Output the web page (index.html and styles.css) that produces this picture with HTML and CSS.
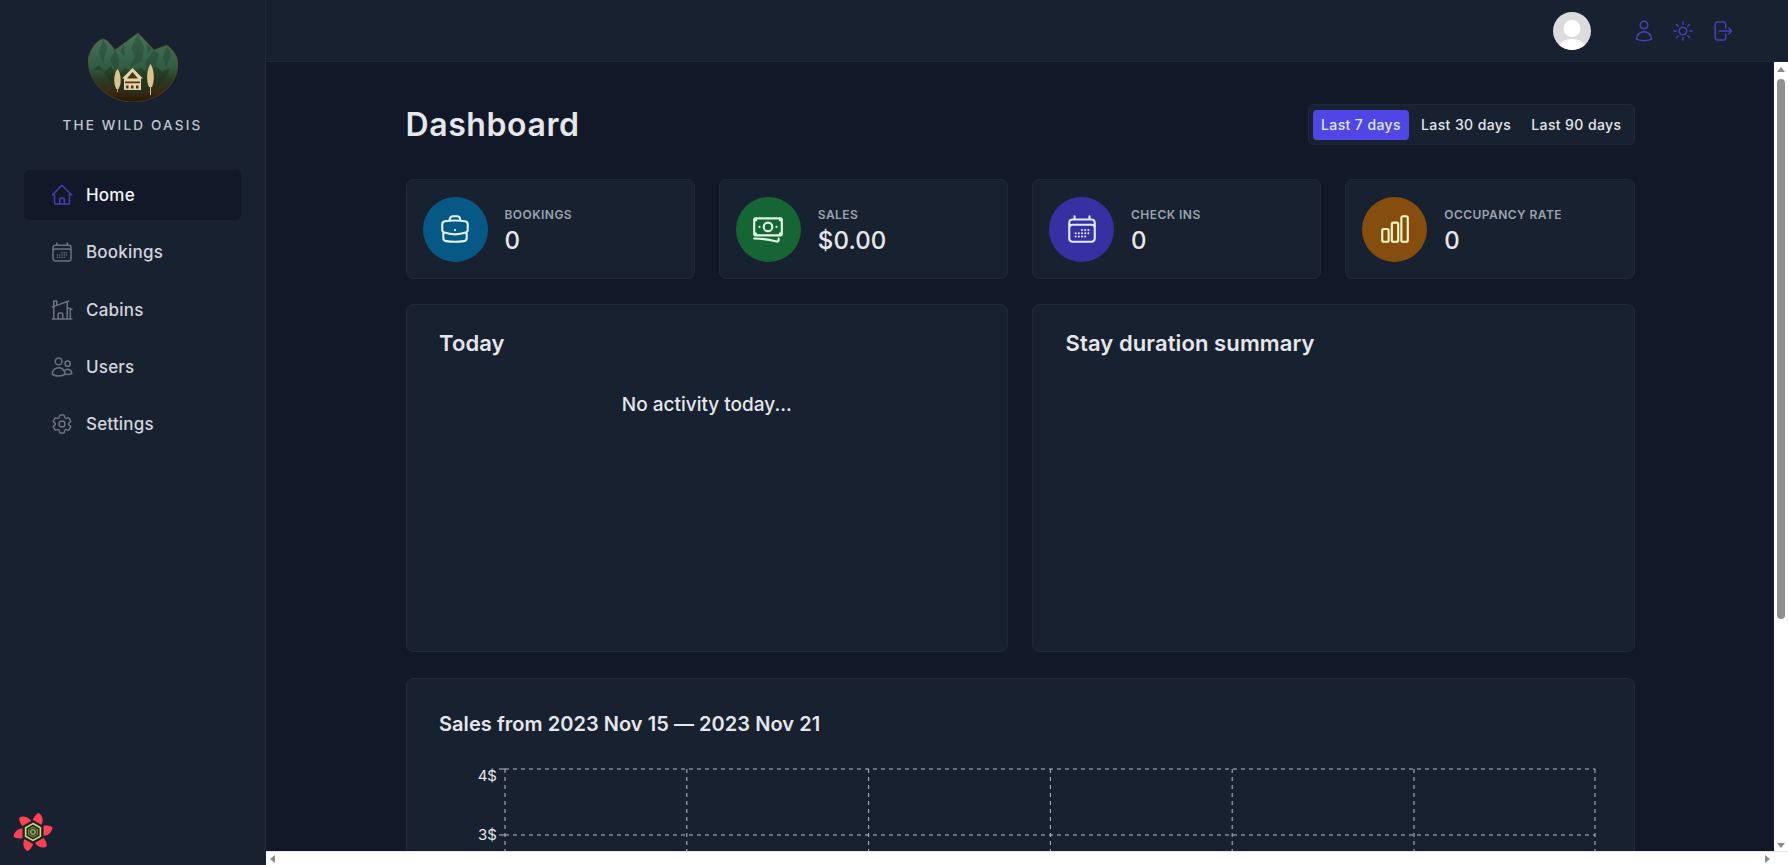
FILE: index.html
```html
<!DOCTYPE html>
<html lang="en">
<head>
<meta charset="utf-8">
<title>The Wild Oasis</title>
<link rel="stylesheet" href="styles.css">
</head>
<body>
<div class="app">
  <aside class="sidebar">
    <div class="brand">
      <svg class="logo" viewBox="0 0 90 70" aria-hidden="true">
        <defs>
          <linearGradient id="lg" x1="0" y1="0" x2="0" y2="1">
            <stop offset="0" stop-color="#47765a"/>
            <stop offset=".5" stop-color="#315c42"/>
            <stop offset=".68" stop-color="#2a3a22"/>
            <stop offset=".86" stop-color="#3a2810"/>
            <stop offset="1" stop-color="#241809"/>
          </linearGradient>
        </defs>
        <path fill="url(#lg)" stroke="#6e4a1c" stroke-opacity=".7" stroke-width=".8" d="M0 28C1 19 8 8 15 7c5 1 9 7 12 11L50 1l16 17 13-5c6 5 11 11 11 19C90 54 68 70 45 70 22 70 0 52 0 28z"/>
        <path fill="#1f3f2d" opacity=".4" d="M27 18l4 9-2 13-7-12zM50 1l-7 15 4 9-6 11 13-7 2-14zM66 18l-9 12 2 12 9-10 3-10zM15 7l-4 13 4 11 4-16zM79 13l-4 12 3 10 5-12zM36 12l-4 8 5 4zM58 12l2 10 4-6z"/>
        <path fill="#20331f" opacity=".55" d="M5 38l6-5 5 8 7-7 6 10 8-8 8 4 8-4 8 6 7-8 6 6 8-4c-4 14-16 25-31 27-16 0-30-12-36-25z"/>
        <path fill="#dcc38a" d="M28.500 57c-4-6-2-17 1-20 3 3 5 14 1 20h-.7v3h-.8v-3zM61 55c-3.500-8-1.500-19 1.500-23 3 4 5 15 1.500 23h-1v8h-1v-8z"/>
        <path fill="#e6d3a8" d="M44.500 36l10.500 10.500h-2V58H36V46.500h-2z"/>
        <path fill="#4f3417" d="M44.500 40l5.500 6.500H39zM37 49.500h15v1.800H37zM38 53.500h2.500v3H38zM43 53.500h2.500v3H43zM48 53.500h2.500v3H48zM42 43.500h5v2h-5z"/>
      </svg>
      <div class="brand-name">THE WILD OASIS</div>
    </div>
    <nav class="nav">
      <a class="nav-item active">
        <svg class="icon" viewBox="0 0 24 24"><path d="M2.25 12l8.954-8.955c.44-.439 1.152-.439 1.591 0L21.75 12M4.5 9.75v10.125c0 .621.504 1.125 1.125 1.125H9.75v-4.875c0-.621.504-1.125 1.125-1.125h2.25c.621 0 1.125.504 1.125 1.125V21h4.125c.621 0 1.125-.504 1.125-1.125V9.75M8.25 21h8.25"/></svg>
        <span>Home</span>
      </a>
      <a class="nav-item">
        <svg class="icon" viewBox="0 0 24 24"><path d="M6.75 3v2.25M17.25 3v2.25M3 18.75V7.5a2.25 2.25 0 012.25-2.25h13.5A2.25 2.25 0 0121 7.5v11.25m-18 0A2.25 2.25 0 005.25 21h13.5A2.25 2.25 0 0021 18.75m-18 0v-7.5A2.25 2.25 0 015.25 9h13.5A2.25 2.25 0 0121 11.25v7.5m-9-6h.008v.008H12v-.008zM12 15h.008v.008H12V15zm0 2.25h.008v.008H12v-.008zM9.75 15h.008v.008H9.75V15zm0 2.25h.008v.008H9.75v-.008zM7.5 15h.008v.008H7.5V15zm0 2.25h.008v.008H7.5v-.008zm6.75-4.5h.008v.008h-.008v-.008zm0 2.25h.008v.008h-.008V15zm0 2.25h.008v.008h-.008v-.008zm2.25-4.5h.008v.008H16.5v-.008zm0 2.25h.008v.008H16.5V15z"/></svg>
        <span>Bookings</span>
      </a>
      <a class="nav-item">
        <svg class="icon" viewBox="0 0 24 24"><path d="M8.25 21v-4.875c0-.621.504-1.125 1.125-1.125h2.25c.621 0 1.125.504 1.125 1.125V21m0 0h4.5V3.545M12.75 21h7.5V10.75M2.25 21h1.5m18 0h-18M2.25 9l4.5-1.636M18.75 3l-1.5.545m0 6.205l3 1m1.5.5l-1.5-.5M6.75 7.364V3h-3v18m3-13.636l10.5-3.819"/></svg>
        <span>Cabins</span>
      </a>
      <a class="nav-item">
        <svg class="icon" viewBox="0 0 24 24"><path d="M15 19.128a9.38 9.38 0 002.625.372 9.337 9.337 0 004.121-.952 4.125 4.125 0 00-7.533-2.493M15 19.128v-.003c0-1.113-.285-2.16-.786-3.07M15 19.128v.106A12.318 12.318 0 018.624 21c-2.331 0-4.512-.645-6.374-1.766l-.001-.109a6.375 6.375 0 0111.964-3.07M12 6.375a3.375 3.375 0 11-6.75 0 3.375 3.375 0 016.75 0zm8.25 2.25a2.625 2.625 0 11-5.25 0 2.625 2.625 0 015.25 0z"/></svg>
        <span>Users</span>
      </a>
      <a class="nav-item">
        <svg class="icon" viewBox="0 0 24 24"><path d="M9.594 3.94c.09-.542.56-.94 1.11-.94h2.593c.55 0 1.02.398 1.11.94l.213 1.281c.063.374.313.686.645.87.074.04.147.083.22.127.324.196.72.257 1.075.124l1.217-.456a1.125 1.125 0 011.37.49l1.296 2.247a1.125 1.125 0 01-.26 1.431l-1.003.827c-.293.24-.438.613-.431.992a6.759 6.759 0 010 .255c-.007.378.138.75.43.99l1.005.828c.424.35.534.954.26 1.43l-1.298 2.247a1.125 1.125 0 01-1.369.491l-1.217-.456c-.355-.133-.75-.072-1.076.124a6.57 6.57 0 01-.22.128c-.331.183-.581.495-.644.869l-.213 1.28c-.09.543-.56.941-1.11.941h-2.594c-.55 0-1.02-.398-1.11-.94l-.213-1.281c-.062-.374-.312-.686-.644-.87a6.52 6.52 0 01-.22-.127c-.325-.196-.72-.257-1.076-.124l-1.217.456a1.125 1.125 0 01-1.369-.49l-1.297-2.247a1.125 1.125 0 01.26-1.431l1.004-.827c.292-.24.437-.613.43-.992a6.932 6.932 0 010-.255c.007-.378-.138-.75-.43-.99l-1.004-.828a1.125 1.125 0 01-.26-1.43l1.297-2.247a1.125 1.125 0 011.37-.491l1.216.456c.356.133.751.072 1.076-.124.072-.044.146-.087.22-.128.332-.183.582-.495.644-.869l.214-1.281z"/><path d="M15 12a3 3 0 11-6 0 3 3 0 016 0z"/></svg>
        <span>Settings</span>
      </a>
    </nav>
    <svg class="devtools" viewBox="0 0 40 40" aria-hidden="true">
      <g fill="#ff4154">
        <path d="M20 20C13.500 15 12.500 6 15.500 1.500 23 2 27 11 20 20Z" transform="rotate(-30 20 20)"/>
        <path d="M20 20C13.500 15 12.500 6 15.500 1.500 23 2 27 11 20 20Z" transform="rotate(30 20 20)"/>
        <path d="M20 20C13.500 15 12.500 6 15.500 1.500 23 2 27 11 20 20Z" transform="rotate(90 20 20)"/>
        <path d="M20 20C13.500 15 12.500 6 15.500 1.500 23 2 27 11 20 20Z" transform="rotate(150 20 20)"/>
        <path d="M20 20C13.500 15 12.500 6 15.500 1.500 23 2 27 11 20 20Z" transform="rotate(210 20 20)"/>
        <path d="M20 20C13.500 15 12.500 6 15.500 1.500 23 2 27 11 20 20Z" transform="rotate(270 20 20)"/>
      </g>
      <polygon points="20,8.500 30,14.250 30,25.750 20,31.500 10,25.750 10,14.250" fill="#18212f"/>
      <polygon points="20,12 27,16 27,24 20,28 13,24 13,16" fill="none" stroke="#d8d96a" stroke-width="1.600"/>
      <polygon points="20,15 24.300,17.500 24.300,22.500 20,25 15.700,22.500 15.700,17.500" fill="#3b4a2a" stroke="#8fa33f" stroke-width=".8"/>
      <circle cx="20" cy="20" r="2.200" fill="none" stroke="#d8d96a" stroke-width=".9"/>
    </svg>
  </aside>

  <div class="workspace">
    <header class="topbar">
      <svg class="avatar" viewBox="0 0 38 38" aria-hidden="true">
        <defs><clipPath id="ac"><circle cx="19" cy="19" r="19"/></clipPath></defs>
        <g clip-path="url(#ac)">
          <rect width="38" height="38" fill="#dcdcdc"/>
          <circle cx="19" cy="16.500" r="8.500" fill="#fff"/>
          <ellipse cx="19" cy="37" rx="14" ry="10" fill="#fff"/>
        </g>
      </svg>
      <div class="top-actions">
        <svg class="icon" viewBox="0 0 24 24"><path d="M15.750 6a3.750 3.750 0 11-7.500 0 3.750 3.750 0 017.500 0zM4.501 20.118a7.500 7.500 0 0114.998 0A17.933 17.933 0 0112 21.750c-2.676 0-5.216-.584-7.499-1.632z"/></svg>
        <svg class="icon" viewBox="0 0 24 24"><path d="M12 3v2.250m6.364.386l-1.591 1.591M21 12h-2.250m-.386 6.364l-1.591-1.591M12 18.750V21m-4.773-4.227l-1.591 1.591M5.250 12H3m4.227-4.773L5.636 5.636M15.750 12a3.750 3.750 0 11-7.500 0 3.750 3.750 0 017.500 0z"/></svg>
        <svg class="icon" viewBox="0 0 24 24"><path d="M15.750 9V5.250A2.250 2.250 0 0013.500 3h-6a2.250 2.250 0 00-2.250 2.250v13.500A2.250 2.250 0 007.500 21h6a2.250 2.250 0 002.250-2.250V15m3 0l3-3m0 0l-3-3m3 3H9"/></svg>
      </div>
    </header>

    <div class="viewport">
      <main class="main">
        <div class="container">
          <div class="page-head">
            <h1 class="page-title">Dashboard</h1>
            <div class="filter">
              <button class="filter-btn current">Last 7 days</button>
              <button class="filter-btn">Last 30 days</button>
              <button class="filter-btn">Last 90 days</button>
            </div>
          </div>

          <section class="stats">
            <div class="stat">
              <div class="stat-icon blue"><svg class="icon" viewBox="0 0 24 24"><path d="M20.250 14.150v4.250c0 1.094-.787 2.036-1.872 2.180-2.087.277-4.216.420-6.378.420s-4.291-.143-6.378-.420c-1.085-.144-1.872-1.086-1.872-2.180v-4.250m16.500 0a2.180 2.180 0 00.750-1.661V8.706c0-1.081-.768-2.015-1.837-2.175a48.114 48.114 0 00-3.413-.387m4.500 8.006c-.194.165-.420.295-.673.380A23.978 23.978 0 0112 15.750c-2.648 0-5.195-.429-7.577-1.220a2.016 2.016 0 01-.673-.380m0 0A2.180 2.180 0 013 12.489V8.706c0-1.081.768-2.015 1.837-2.175a48.111 48.111 0 013.413-.387m7.500 0V5.250A2.250 2.250 0 0013.500 3h-3a2.250 2.250 0 00-2.250 2.250v.894m7.500 0a48.667 48.667 0 00-7.500 0M12 12.750h.008v.008H12v-.008z"/></svg></div>
              <div class="stat-text"><div class="stat-label">Bookings</div><div class="stat-value">0</div></div>
            </div>
            <div class="stat">
              <div class="stat-icon green"><svg class="icon" viewBox="0 0 24 24"><path d="M2.250 18.750a60.070 60.070 0 0115.797 2.101c.727.198 1.453-.342 1.453-1.096V18.750M3.750 4.500v.750A.750.750 0 013 6h-.750m0 0v-.375c0-.621.504-1.125 1.125-1.125H20.250M2.250 6v9m18-10.500v.750c0 .414.336.750.750.750h.750m-1.500-1.500h.375c.621 0 1.125.504 1.125 1.125v9.750c0 .621-.504 1.125-1.125 1.125h-.375m1.500-1.500H21a.750.750 0 00-.750.750v.750m0 0H3.750m0 0h-.375a1.125 1.125 0 01-1.125-1.125V15m1.500 1.500v-.750A.750.750 0 003 15h-.750M15 10.500a3 3 0 11-6 0 3 3 0 016 0zm3 0h.008v.008H18V10.500zm-12 0h.008v.008H6V10.500z"/></svg></div>
              <div class="stat-text"><div class="stat-label">Sales</div><div class="stat-value">$0.00</div></div>
            </div>
            <div class="stat">
              <div class="stat-icon indigo"><svg class="icon" viewBox="0 0 24 24"><path d="M6.750 3v2.250M17.250 3v2.250M3 18.750V7.500a2.250 2.250 0 012.250-2.250h13.500A2.250 2.250 0 0121 7.500v11.250m-18 0A2.250 2.250 0 005.250 21h13.500A2.250 2.250 0 0021 18.750m-18 0v-7.500A2.250 2.250 0 015.250 9h13.500A2.250 2.250 0 0121 11.250v7.500m-9-6h.008v.008H12v-.008zM12 15h.008v.008H12V15zm0 2.250h.008v.008H12v-.008zM9.750 15h.008v.008H9.750V15zm0 2.250h.008v.008H9.750v-.008zM7.500 15h.008v.008H7.500V15zm0 2.250h.008v.008H7.500v-.008zm6.750-4.500h.008v.008h-.008v-.008zm0 2.250h.008v.008h-.008V15zm0 2.250h.008v.008h-.008v-.008zm2.250-4.500h.008v.008H16.500v-.008zm0 2.250h.008v.008H16.500V15z"/></svg></div>
              <div class="stat-text"><div class="stat-label">Check ins</div><div class="stat-value">0</div></div>
            </div>
            <div class="stat">
              <div class="stat-icon amber"><svg class="icon" viewBox="0 0 24 24"><path d="M3 13.125C3 12.504 3.504 12 4.125 12h2.250c.621 0 1.125.504 1.125 1.125v6.750C7.500 20.496 6.996 21 6.375 21h-2.250A1.125 1.125 0 013 19.875v-6.750zM9.750 8.625c0-.621.504-1.125 1.125-1.125h2.250c.621 0 1.125.504 1.125 1.125v11.250c0 .621-.504 1.125-1.125 1.125h-2.250a1.125 1.125 0 01-1.125-1.125V8.625zM16.500 4.125c0-.621.504-1.125 1.125-1.125h2.250C20.496 3 21 3.504 21 4.125v15.750c0 .621-.504 1.125-1.125 1.125h-2.250a1.125 1.125 0 01-1.125-1.125V4.125z"/></svg></div>
              <div class="stat-text"><div class="stat-label">Occupancy rate</div><div class="stat-value">0</div></div>
            </div>
          </section>

          <section class="panels">
            <div class="panel tall">
              <h2 class="panel-title large">Today</h2>
              <p class="no-activity">No activity today...</p>
            </div>
            <div class="panel tall">
              <h2 class="panel-title large">Stay duration summary</h2>
            </div>
          </section>

          <section class="panel sales">
            <h2 class="panel-title">Sales from 2023 Nov 15 — 2023 Nov 21</h2>
            <svg class="chart" viewBox="0 0 1163 92" aria-label="Sales chart">
              <g class="grid">
                <path d="M66 9H1156M66 75H1156"/>
                <path d="M66 9V92M247.800 9V92M429.600 9V92M611.400 9V92M793.200 9V92M975 9V92M1156 9V92"/>
              </g>
              <path class="ticks" d="M60 9H66M60 75H66"/>
              <text class="tick-label" x="58" y="21" text-anchor="end">4$</text>
              <text class="tick-label" x="58" y="80" text-anchor="end">3$</text>
            </svg>
          </section>
        </div>
      </main>
      <div class="vbar">
        <span class="arrow up"></span>
        <span class="vthumb"></span>
        <span class="arrow down"></span>
      </div>
    </div>
    <div class="hbar">
      <span class="arrow left"></span>
      <span class="arrow right"></span>
    </div>
  </div>
</div>
</body>
</html>
```
FILE: styles.css
```css
* { box-sizing: border-box; }
html, body { margin: 0; height: 100%; overflow: hidden; }
body {
  font-family: Inter, "Noto Sans", "Liberation Sans", sans-serif;
  background: #111827;
  color: #e5e7eb;
}
.app {
  display: grid;
  grid-template-columns: 266px 1fr;
  height: 865px;
}
.icon {
  width: 24px;
  height: 24px;
  flex: none;
  fill: none;
  stroke: currentColor;
  stroke-width: 1.5;
  stroke-linecap: round;
  stroke-linejoin: round;
}

/* Sidebar */
.sidebar {
  position: relative;
  background: #18212f;
  border-right: 1px solid #1f2937;
  padding: 32px 24px 0;
}
.brand {
  display: flex;
  flex-direction: column;
  align-items: center;
}
.logo { width: 90px; height: 70px; display: block; }
.brand-name {
  margin-top: 13px;
  font-size: 13.5px;
  line-height: 20px;
  font-weight: 500;
  letter-spacing: 2.2px;
  color: #c3c8d0;
  white-space: nowrap;
}
.nav {
  margin-top: 35px;
  display: flex;
  flex-direction: column;
  gap: 7.3px;
}
.nav-item {
  display: flex;
  align-items: center;
  gap: 12px;
  height: 50px;
  padding: 0 26px;
  border-radius: 5px;
  color: #d1d5db;
  font-size: 17px;
  font-weight: 500;
  letter-spacing: .2px;
}
.nav-item .icon { color: #6b7280; }
.nav-item.active { background: #111827; color: #f3f4f6; }
.nav-item.active .icon { color: #4540b5; }
.devtools {
  position: absolute;
  left: 12px;
  bottom: 12.500px;
  width: 42px;
  height: 42px;
}

/* Top bar */
.workspace {
  display: flex;
  flex-direction: column;
  min-width: 0;
  height: 865px;
}
.topbar {
  flex: none;
  height: 62px;
  background: #18212f;
  border-bottom: 1px solid #1f2937;
  display: flex;
  align-items: center;
  justify-content: flex-end;
  padding-right: 54px;
}
.avatar { width: 38px; height: 38px; display: block; }
.top-actions {
  margin-left: 41px;
  display: flex;
  gap: 15px;
  color: #4540b5;
}

/* Scrolling region */
.viewport {
  flex: 1;
  display: flex;
  min-height: 0;
}
.main {
  flex: 1;
  min-width: 0;
  overflow: hidden;
  background: #111827;
  padding: 42px 0 0 0;
}
.container { width: 1229px; margin: 0 auto; }
.page-head {
  display: flex;
  align-items: center;
  justify-content: space-between;
  height: 41px;
}
.page-title {
  margin: 0;
  font-size: 32px;
  line-height: 41px;
  font-weight: 600;
  letter-spacing: .6px;
  color: #e5e7eb;
}
.filter {
  display: flex;
  align-items: center;
  gap: 4px;
  height: 41px;
  padding: 0 4px;
  background: #18212f;
  border: 1px solid #1f2937;
  border-radius: 5px;
}
.filter-btn {
  height: 30px;
  padding: 0 8px;
  border: 0;
  border-radius: 4px;
  background: transparent;
  color: #e5e7eb;
  font: 500 14px/30px Inter, sans-serif;
  letter-spacing: .4px;
}
.filter-btn.current { background: #4f46e5; color: #e0e7ff; }

/* Stats */
.stats {
  margin-top: 34px;
  display: grid;
  grid-template-columns: repeat(4, 1fr);
  gap: 24px;
}
.stat {
  display: flex;
  align-items: center;
  gap: 17px;
  height: 100px;
  padding: 0 16px;
  background: #18212f;
  border: 1px solid #1f2937;
  border-radius: 7px;
}
.stat-icon {
  width: 65px;
  height: 65px;
  flex: none;
  border-radius: 50%;
  display: flex;
  align-items: center;
  justify-content: center;
}
.stat-icon .icon { width: 34px; height: 34px; }
.blue { background: #075985; color: #e0f2fe; }
.green { background: #166534; color: #dcfce7; }
.indigo { background: #3730a3; color: #e0e7ff; }
.amber { background: #854d0e; color: #fef9c3; }
.stat-text { padding-top: 4px; }
.stat-label {
  font-size: 12px;
  line-height: 16px;
  font-weight: 600;
  letter-spacing: .45px;
  text-transform: uppercase;
  color: #9ca3af;
}
.stat-value {
  margin-top: 3px;
  font-size: 24px;
  line-height: 29px;
  font-weight: 500;
  letter-spacing: .15px;
  color: #e5e7eb;
}

/* Panels */
.panels {
  margin-top: 25px;
  display: grid;
  grid-template-columns: 1fr 1fr;
  gap: 24px;
}
.panel {
  background: #18212f;
  border: 1px solid #1f2937;
  border-radius: 7px;
  padding: 23px 32.500px;
}
.panel.tall { height: 348px; }
.panel-title {
  margin: 0;
  font-size: 20px;
  line-height: 30px;
  font-weight: 600;
  letter-spacing: .05px;
  color: #e5e7eb;
}
.panel-title.large { font-size: 22px; letter-spacing: .1px; }
.no-activity {
  margin: 33px 0 0;
  text-align: center;
  font-size: 19px;
  line-height: 28px;
  font-weight: 500;
  color: #e5e7eb;
}
.sales {
  margin-top: 26px;
  height: 400px;
  padding-top: 30px;
}
.chart {
  display: block;
  width: 1163px;
  height: 92px;
  margin-top: 21px;
}
.grid path, .ticks {
  fill: none;
  stroke: #b9bec6;
  stroke-width: 1;
}
.grid path { stroke-dasharray: 4 4; }
.tick-label {
  font-size: 15px;
  fill: #e5e7eb;
}

/* Scrollbars */
.vbar {
  position: relative;
  flex: none;
  width: 14px;
  background: #fff;
}
.vthumb {
  position: absolute;
  left: 3px;
  top: 17px;
  width: 8px;
  height: 540px;
  border-radius: 4px;
  background: #909090;
}
.hbar {
  position: relative;
  flex: none;
  height: 14px;
  background: #fff;
  border-top: 1px solid #e4e4f0;
}
.arrow { position: absolute; width: 0; height: 0; }
.up {
  top: 5px; left: 3px;
  border-left: 4px solid transparent;
  border-right: 4px solid transparent;
  border-bottom: 5px solid #8c8c8c;
}
.down {
  bottom: 3px; left: 3px;
  border-left: 4px solid transparent;
  border-right: 4px solid transparent;
  border-top: 5px solid #8c8c8c;
}
.left {
  top: 3px; left: 4px;
  border-top: 4px solid transparent;
  border-bottom: 4px solid transparent;
  border-right: 5px solid #8c8c8c;
}
.right {
  top: 3px; right: 18px;
  border-top: 4px solid transparent;
  border-bottom: 4px solid transparent;
  border-left: 5px solid #8c8c8c;
}
```
